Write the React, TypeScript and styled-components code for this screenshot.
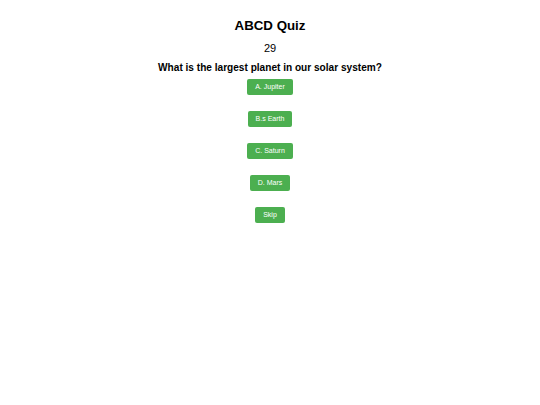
import React from "react";
import styled, { createGlobalStyle } from "styled-components";

const Global = createGlobalStyle`
  html, body { margin: 0; padding: 0; background: #ffffff; }
  body { font-family: "Liberation Sans", Arial, sans-serif; color: #000; }
`;

const Page = styled.div`
  display: flex;
  flex-direction: column;
  align-items: center;
  padding-top: 17px;
`;

const Title = styled.h1`
  margin: 0;
  font-size: 13.3px;
  line-height: 18px;
  font-weight: bold;
`;

const Timer = styled.div`
  margin-top: 7px;
  font-size: 11px;
  line-height: 13px;
`;

const Question = styled.h2`
  margin: 6px 0 0;
  font-size: 10.1px;
  line-height: 13px;
  font-weight: bold;
`;

const Options = styled.div`
  display: flex;
  flex-direction: column;
  align-items: center;
  gap: 16px;
  margin-top: 5px;
`;

const OptionButton = styled.button`
  background: #4caf50;
  color: #ffffff;
  border: none;
  border-radius: 2px;
  font-family: "Liberation Sans", Arial, sans-serif;
  font-size: 7px;
  line-height: 8px;
  height: 16px;
  padding: 0 8px;
  cursor: pointer;
`;

const options = ["A. Jupiter", "B.s Earth", "C. Saturn", "D. Mars"];

export default function App() {
  return (
    <>
      <Global />
      <Page>
        <Title>ABCD Quiz</Title>
        <Timer>29</Timer>
        <Question>What is the largest planet in our solar system?</Question>
        <Options>
          {options.map((o) => (
            <OptionButton key={o}>{o}</OptionButton>
          ))}
          <OptionButton>Skip</OptionButton>
        </Options>
      </Page>
    </>
  );
}
